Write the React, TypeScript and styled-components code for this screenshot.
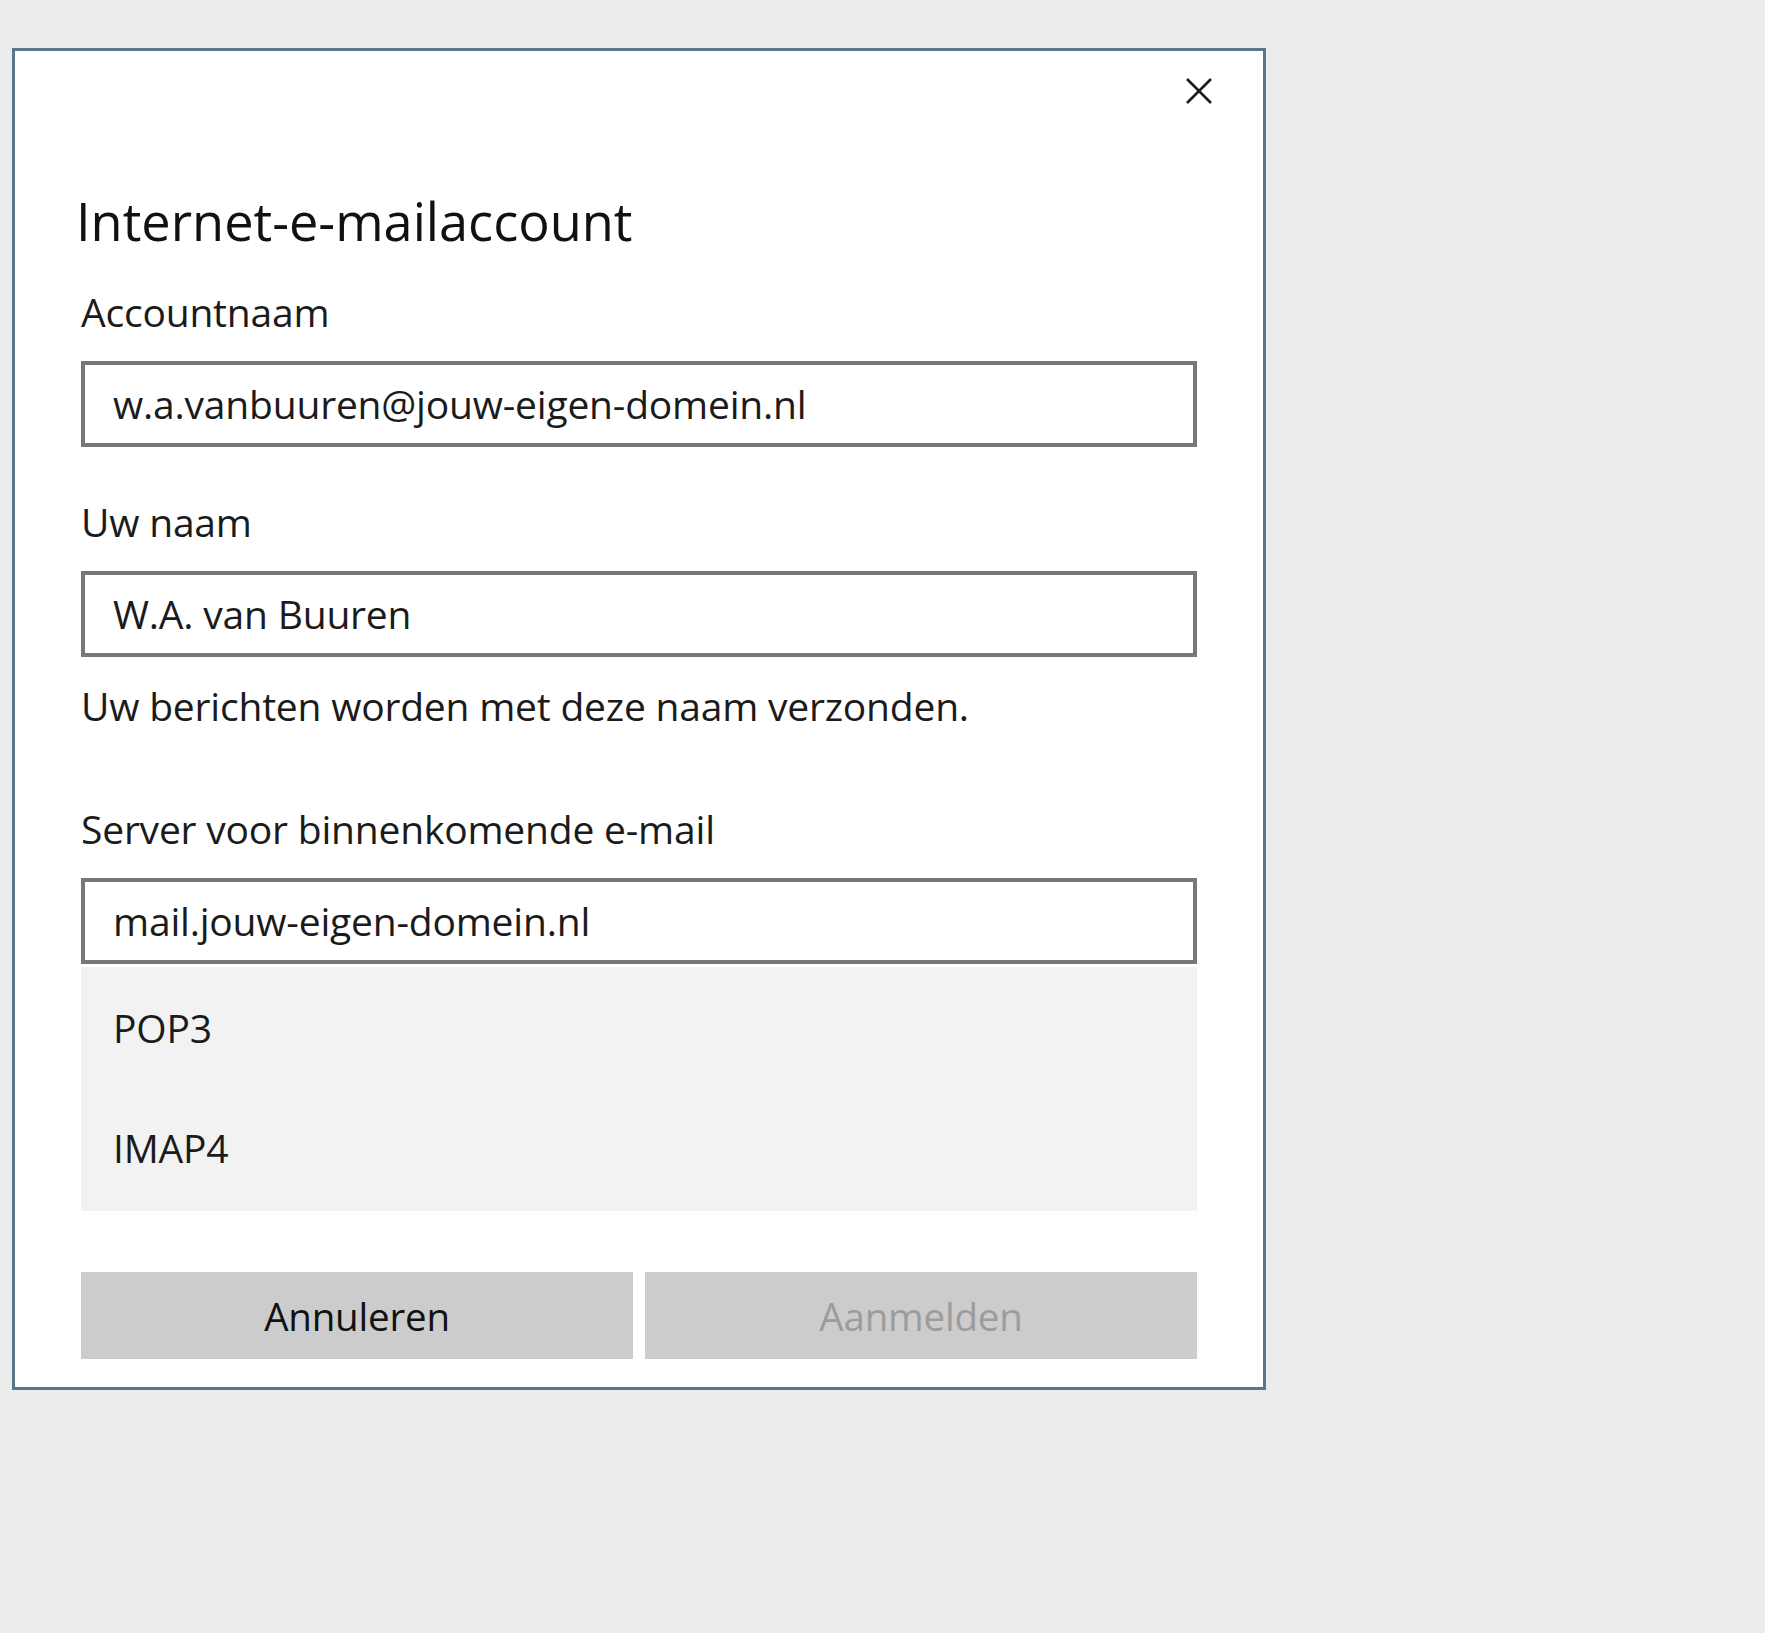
import styled, { createGlobalStyle } from 'styled-components';

const GlobalStyle = createGlobalStyle`
  html, body {
    margin: 0;
    background: #ececec;
  }

  body {
    font-family: "Segoe UI", "Open Sans", "Noto Sans", sans-serif;
    color: #1b1b1b;
  }
`;

type Option = {
  id: string;
  label: string;
};

const serverTypes: Option[] = [
  { id: 'pop3', label: 'POP3' },
  { id: 'imap4', label: 'IMAP4' },
];

export default function App() {
  return (
    <Page>
      <GlobalStyle />
      <Dialog role="dialog" aria-label="Internet-e-mailaccount">
        <TopBar>
          <CloseButton aria-label="Sluiten">
            <svg width="28" height="28" viewBox="0 0 28 28">
              <path
                d="M2 2 L26 26 M26 2 L2 26"
                stroke="#1b1b1b"
                strokeWidth="2.6"
                fill="none"
              />
            </svg>
          </CloseButton>
        </TopBar>

        <Body>
          <Title>Internet-e-mailaccount</Title>

          <Field $spaceAbove={35}>
            <Label>Accountnaam</Label>
            <TextBox>w.a.vanbuuren@jouw-eigen-domein.nl</TextBox>
          </Field>

          <Field $spaceAbove={51}>
            <Label>Uw naam</Label>
            <TextBox>W.A. van Buuren</TextBox>
          </Field>
          <Hint>Uw berichten worden met deze naam verzonden.</Hint>

          <Field $spaceAbove={75}>
            <Label>Server voor binnenkomende e-mail</Label>
            <TextBox>mail.jouw-eigen-domein.nl</TextBox>
          </Field>

          <Options role="listbox">
            {serverTypes.map((option) => (
              <OptionRow key={option.id} role="option">
                {option.label}
              </OptionRow>
            ))}
          </Options>

          <Actions>
            <ActionButton>Annuleren</ActionButton>
            <ActionButton $disabled>Aanmelden</ActionButton>
          </Actions>
        </Body>
      </Dialog>
    </Page>
  );
}

const Page = styled.div`
  min-height: 1633px;
  padding: 48px 0 0 12px;
  box-sizing: border-box;
`;

const Dialog = styled.section`
  width: 1254px;
  height: 1342px;
  box-sizing: border-box;
  border: 3px solid #5a7889;
  background: #ffffff;
  display: flex;
  flex-direction: column;
`;

const TopBar = styled.div`
  display: flex;
  justify-content: flex-end;
  padding: 16px 40px 0 0;
`;

const CloseButton = styled.button`
  width: 48px;
  height: 48px;
  display: flex;
  align-items: center;
  justify-content: center;
  padding: 0;
  border: none;
  background: transparent;
`;

const Body = styled.div`
  display: flex;
  flex-direction: column;
  padding: 0 66px 27px 66px;
  font-size: 39px;
  letter-spacing: -0.2px;
  line-height: 48px;
`;

const Title = styled.h1`
  margin: 74px 0 0 -5px;
  font-size: 52.3px;
  line-height: 64px;
  font-weight: 400;
  letter-spacing: 0;
  color: #111111;
`;

const Field = styled.div<{ $spaceAbove: number }>`
  display: flex;
  flex-direction: column;
  gap: 25px;
  margin-top: ${(p) => p.$spaceAbove}px;
`;

const Label = styled.div``;

const TextBox = styled.div`
  height: 86px;
  box-sizing: border-box;
  border: 4px solid #777777;
  padding: 0 28px;
  display: flex;
  align-items: center;
  background: #ffffff;
`;

const Hint = styled.p`
  margin: 25px 0 0;
`;

const Options = styled.div`
  margin-top: 3px;
  padding: 1px 0 3px;
  background: #f2f2f2;
  display: flex;
  flex-direction: column;
`;

const OptionRow = styled.div`
  height: 120px;
  display: flex;
  align-items: center;
  padding-left: 32px;
`;

const Actions = styled.div`
  display: grid;
  grid-template-columns: 1fr 1fr;
  gap: 12px;
  margin-top: 61px;
`;

const ActionButton = styled.button<{ $disabled?: boolean }>`
  height: 87px;
  border: none;
  background: #cccccc;
  font-family: inherit;
  font-size: 38.5px;
  letter-spacing: -0.2px;
  color: ${(p) => (p.$disabled ? '#9c9c9c' : '#111111')};
  padding: 0;
`;
